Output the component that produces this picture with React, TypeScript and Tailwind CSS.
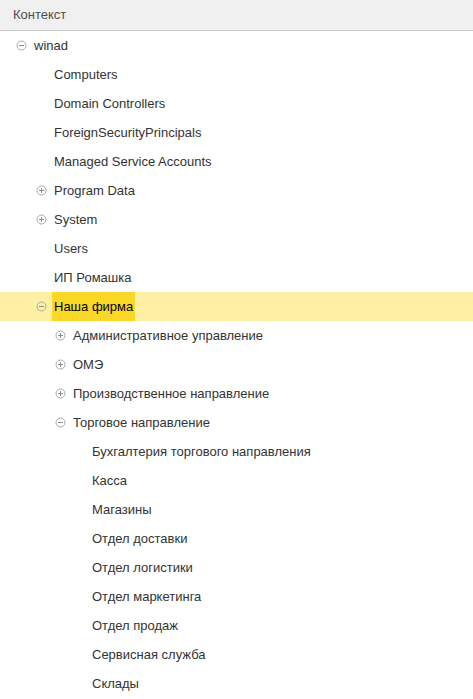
import React from "react";

type Node = { label: string; level: number; toggle?: "open" | "closed"; selected?: boolean };

const rows: Node[] = [
  { label: "winad", level: 0, toggle: "open" },
  { label: "Computers", level: 1 },
  { label: "Domain Controllers", level: 1 },
  { label: "ForeignSecurityPrincipals", level: 1 },
  { label: "Managed Service Accounts", level: 1 },
  { label: "Program Data", level: 1, toggle: "closed" },
  { label: "System", level: 1, toggle: "closed" },
  { label: "Users", level: 1 },
  { label: "ИП Ромашка", level: 1 },
  { label: "Наша фирма", level: 1, toggle: "open", selected: true },
  { label: "Административное управление", level: 2, toggle: "closed" },
  { label: "ОМЭ", level: 2, toggle: "closed" },
  { label: "Производственное направление", level: 2, toggle: "closed" },
  { label: "Торговое направление", level: 2, toggle: "open" },
  { label: "Бухгалтерия торгового направления", level: 3 },
  { label: "Касса", level: 3 },
  { label: "Магазины", level: 3 },
  { label: "Отдел доставки", level: 3 },
  { label: "Отдел логистики", level: 3 },
  { label: "Отдел маркетинга", level: 3 },
  { label: "Отдел продаж", level: 3 },
  { label: "Сервисная служба", level: 3 },
  { label: "Склады", level: 3 },
];

const indent = ["pl-[16px]", "pl-[36px]", "pl-[55px]", "pl-[74px]"];

function Toggle({ open }: { open: boolean }) {
  return (
    <svg width="11" height="11" viewBox="0 0 11 11" className="shrink-0">
      <circle cx="5.5" cy="5.5" r="4.5" fill="none" stroke="#a8a8a8" strokeWidth="1" />
      <line x1="3" y1="5.5" x2="8" y2="5.5" stroke="#8c8c8c" strokeWidth="1" />
      {!open && <line x1="5.5" y1="3" x2="5.5" y2="8" stroke="#8c8c8c" strokeWidth="1" />}
    </svg>
  );
}

export default function App() {
  return (
    <div className="w-[473px] h-[699px] bg-white overflow-hidden font-['Liberation_Sans',Arial,sans-serif] text-[13px] text-[#333]">
      <div className="h-[31px] bg-[#f0f0f0] border-b border-[#c8c8c8] flex items-center pl-[13px] text-[#4d4d4d]">
        Контекст
      </div>
      {rows.map((r, i) => (
        <div
          key={i}
          className={`h-[29px] flex items-center ${indent[r.level]} ${r.selected ? "bg-[#fdf0a4]" : ""}`}
        >
          <div className="w-[18px] flex items-center">{r.toggle && <Toggle open={r.toggle === "open"} />}</div>
          <span className={r.selected ? "h-[29px] flex items-center px-[2px] -ml-[2px] bg-[#fbd827] text-black" : ""}>
            {r.label}
          </span>
        </div>
      ))}
    </div>
  );
}
